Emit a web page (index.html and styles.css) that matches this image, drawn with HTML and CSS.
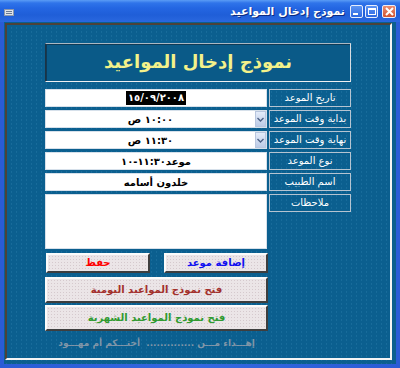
FILE: index.html
```html
<!DOCTYPE html>
<html lang="ar">
<head>
	<meta charset="utf-8">
	<title>نموذج إدخال المواعيد</title>
	<link rel="stylesheet" href="styles.css">
</head>
<body>
	<div class="window">
		<div class="titlebar">
			<span class="app_icon"><i></i><i></i></span>
			<span class="caption">نموذج إدخال المواعيد</span>
			<span class="tb_btn tb_min"><i></i></span>
			<span class="tb_btn tb_max"><i></i></span>
			<span class="tb_btn tb_close">
				<svg width="9" height="9" viewBox="0 0 9 9"><path d="M1 1L8 8M8 1L1 8" stroke="#fff" stroke-width="2"/></svg>
			</span>
		</div>
		<div class="client">
			<div class="panel">
				<div class="form" dir="rtl">
					<div class="heading">نموذج إدخال المواعيد</div>

					<div class="row">
						<div class="label">تاريخ الموعد</div>
						<div class="field"><span class="sel">١٥/٠٩/٢٠٠٨</span></div>
					</div>
					<div class="row">
						<div class="label">بداية وقت الموعد</div>
						<div class="field combo">
							<span class="arrow"><svg width="7" height="5" viewBox="0 0 7 5"><path d="M0.5 1L3.5 4L6.5 1" stroke="#4d6185" stroke-width="1.4" fill="none"/></svg></span>
							<span class="value">١٠:٠٠ ص</span>
						</div>
					</div>
					<div class="row">
						<div class="label">نهاية وقت الموعد</div>
						<div class="field combo">
							<span class="arrow"><svg width="7" height="5" viewBox="0 0 7 5"><path d="M0.5 1L3.5 4L6.5 1" stroke="#4d6185" stroke-width="1.4" fill="none"/></svg></span>
							<span class="value">١١:٣٠ ص</span>
						</div>
					</div>
					<div class="row">
						<div class="label">نوع الموعد</div>
						<div class="field">موعد<bdo dir="ltr">١٠-١١:٣٠</bdo></div>
					</div>
					<div class="row">
						<div class="label">اسم الطبيب</div>
						<div class="field">خلدون أسامه</div>
					</div>
					<div class="row notes">
						<div class="label">ملاحظات</div>
						<div class="field"></div>
					</div>

					<div class="btn_row">
						<div class="btn blue">إضافة موعد</div>
						<div class="btn red">حفظ</div>
					</div>
					<div class="btn wide brown">فتح نموذج المواعيد اليومية</div>
					<div class="btn wide green">فتح نموذج المواعيد الشهرية</div>
					<div class="footer">إهـــداء مـــن ..............&nbsp; أختـــكم أم مهـــود</div>
				</div>
			</div>
		</div>
	</div>
</body>
</html>
```

FILE: styles.css
```css
* {
	margin: 0;
	padding: 0;
	box-sizing: border-box;
}
body {
	font-family: "DejaVu Sans", sans-serif;
	background: #fff;
}
.window {
	display: flex;
	flex-direction: column;
	width: 400px;
	height: 368px;
	background: linear-gradient(to right, #2a5cd6, #3468e0 50%, #2a5cd6);
}
.titlebar {
	display: flex;
	align-items: center;
	height: 22px;
	padding: 0 4px 0 4px;
	background: linear-gradient(to bottom, #5b9cf5 0, #2f74ea 3px, #2466e2 8px, #1f5ed8 15px, #2a68df 22px);
}
.app_icon {
	display: flex;
	flex-direction: column;
	gap: 1px;
	width: 10px;
	height: 7px;
	margin-top: 2px;
	padding: 1px;
	background: #dfe3ea;
	border: 1px solid #8c98ab;
}
.app_icon i {
	display: block;
	height: 1px;
	background: #6b7a92;
}
.caption {
	flex: 1;
	text-align: right;
	padding-right: 3px;
	color: #fff;
	font-size: 11px;
	font-weight: bold;
	text-shadow: 1px 1px 0 #0a2a80;
}
.tb_btn {
	display: flex;
	align-items: center;
	justify-content: center;
	width: 13px;
	height: 13px;
	margin-left: 2px;
	border: 1px solid #e8eefc;
	border-radius: 2px;
	background: linear-gradient(to bottom, #5d94f2, #2c68e2);
}
.tb_min i {
	display: block;
	width: 5px;
	height: 2px;
	margin-top: 6px;
	margin-right: 2px;
	background: #fff;
}
.tb_max i {
	display: block;
	width: 8px;
	height: 7px;
	border: 1px solid #fff;
	border-top-width: 2px;
}
.tb_close {
	width: 14px;
	margin-left: 4px;
	background: linear-gradient(to bottom, #e98d72, #d2542f);
}
.client {
	flex: 1;
	display: flex;
	margin: 0 4px 4px 4px;
	background-color: #0b5f8f;
	background-image: radial-gradient(#1a6d9c 0.6px, transparent 0.8px);
	background-size: 5px 4px;
}
.panel {
	flex: 1;
	margin: 1px 4px 4px 1px;
	padding: 18px 0 0 38px;
	border: 2px solid;
	border-color: #4d4238 #f4f4f4 #f4f4f4 #4d4238;
}
.form {
	display: flex;
	flex-direction: column;
	align-items: flex-end;
	width: 306px;
}
.heading {
	width: 306px;
	height: 39px;
	margin-bottom: 7px;
	border: 1px solid;
	border-color: #aab8c4 #d9dde2 #eef0f2 #1d3344;
	box-shadow: inset 1px 1px 0 #0f3a56;
	background: #0a5a88;
	color: #f4f28a;
	font-size: 18px;
	font-weight: bold;
	line-height: 36px;
	text-align: center;
}
.row {
	display: flex;
	gap: 2px;
	width: 306px;
	height: 18px;
	margin-bottom: 3px;
}
.label {
	width: 82px;
	height: 18px;
	border: 1px solid #b6c4d1;
	color: #fff;
	font-size: 10px;
	line-height: 16px;
	text-align: center;
}
.field {
	display: flex;
	align-items: center;
	justify-content: center;
	width: 222px;
	background: #fff;
	border: 1px solid #d6e0ea;
	color: #000;
	font-size: 10px;
	font-weight: bold;
}
.sel {
	padding: 0 2px;
	background: #000;
	color: #fff;
	line-height: 14px;
}
.combo {
	justify-content: flex-start;
}
.combo .value {
	flex: 1;
	text-align: center;
}
.arrow {
	display: flex;
	align-items: center;
	justify-content: center;
	width: 11px;
	height: 16px;
	background: linear-gradient(to bottom, #e4ecfa, #bccbe6);
	border: 1px solid #b8c6de;
}
.notes {
	height: 55px;
	margin-bottom: 4px;
}
.notes .field {
	height: 55px;
}
.btn_row {
	display: flex;
	justify-content: space-between;
	width: 223px;
	margin-bottom: 4px;
	padding-left: 1px;
}
.btn {
	width: 104px;
	height: 20px;
	border: 2px solid;
	border-color: #fbfbfb #3e3e3e #3e3e3e #fbfbfb;
	background-color: #ebe5e7;
	background-image: radial-gradient(#d5c9cd 0.6px, transparent 0.8px);
	background-size: 3px 3px;
	font-size: 10px;
	font-weight: bold;
	line-height: 16px;
	text-align: center;
}
.wide {
	width: 223px;
	height: 26px;
	margin-bottom: 2px;
	line-height: 22px;
}
.red {
	color: #f00;
}
.blue {
	color: #1010f0;
}
.brown {
	color: #a3302c;
}
.green {
	color: #2f9a2f;
}
.footer {
	width: 223px;
	margin-top: 5px;
	color: #8196a8;
	font-size: 9px;
	font-weight: bold;
	text-align: center;
}
```
